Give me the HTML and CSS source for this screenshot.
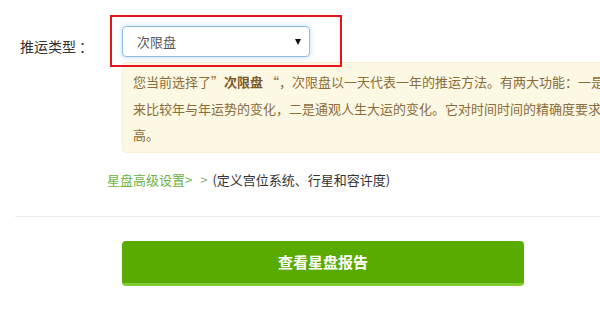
FILE: index.html
```html
<!DOCTYPE html>
<html lang="zh-CN">
<head>
<meta charset="utf-8">
<title>推运类型</title>
<link rel="stylesheet" href="styles.css">
</head>
<body>
<div class="page">
  <div class="form-row">
    <label class="label">推运类型<span class="colon">：</span></label>
    <div class="control">
      <div class="select-wrap">
        <select class="select">
          <option>次限盘</option>
        </select>
      </div>
      <div class="info">您当前选择了”<b>次限盘</b> “，次限盘以一天代表一年的推运方法。有两大功能：一是用来比较年与年运势的变化，二是通观人生大运的变化。它对时间时间的精确度要求很高。</div>
      <div class="highlight"></div>
    </div>
  </div>
  <div class="advanced">
    <a class="adv-link" href="#">星盘高级设置&gt;</a><span class="adv-arrow">&gt;</span><span class="adv-desc">(定义宫位系统、行星和容许度)</span>
  </div>
  <div class="divider"></div>
  <div class="actions">
    <button class="submit" type="button">查看星盘报告</button>
  </div>
</div>
</body>
</html>
```

FILE: styles.css
```css
html, body {
  margin: 0;
  padding: 0;
  background: #ffffff;
  overflow: hidden;
}

body {
  font-family: "Noto Sans CJK SC", "Noto Sans", sans-serif;
  color: #333333;
}

.page {
  width: 600px;
  padding-top: 26px;
}

.form-row {
  display: flex;
  align-items: flex-start;
}

.label {
  flex: none;
  width: 122px;
  box-sizing: border-box;
  padding-left: 20px;
  padding-top: 5px;
  font-size: 14px;
  line-height: 31px;
  color: #333333;
}

.colon {
  margin-left: 3px;
}

.control {
  position: relative;
  flex: none;
  width: 700px;
}

.select-wrap {
  position: relative;
  width: 188px;
  height: 31px;
}

.select-wrap::after {
  content: "";
  position: absolute;
  right: 9px;
  top: 13px;
  border-left: 3px solid transparent;
  border-right: 3px solid transparent;
  border-top: 6px solid #111111;
  pointer-events: none;
}

.select {
  -webkit-appearance: none;
  appearance: none;
  width: 188px;
  height: 31px;
  box-sizing: border-box;
  margin: 0;
  padding: 0 14px;
  border: 1px solid #8dbde6;
  border-radius: 4px;
  background: #ffffff;
  box-shadow: 0 0 5px rgba(102, 175, 233, 0.45);
  font-family: "Noto Sans CJK SC", sans-serif;
  font-size: 13px;
  color: #555555;
  outline: none;
}

.info {
  width: 492px;
  margin-top: 5px;
  padding: 6px 10px 3px 10px;
  background: #fcf8e3;
  border: 1px solid #f8efd6;
  border-radius: 4px;
  font-size: 13px;
  line-height: 26.5px;
  color: #8a6d3b;
}

.info b {
  color: #7a5a2a;
}

.highlight {
  position: absolute;
  left: -12px;
  top: -11px;
  width: 228px;
  height: 48px;
  border: 2px solid #e3141b;
  pointer-events: none;
}

.advanced {
  padding-left: 107px;
  margin-top: 17px;
  font-size: 13px;
  line-height: 20px;
}

.adv-link {
  color: #6db33f;
  text-decoration: none;
}

.adv-arrow {
  padding: 0 5px 0 8px;
  color: #8fa87a;
}

.adv-desc {
  color: #333333;
}

.divider {
  margin: 26px 0 0 15px;
  height: 1px;
  background: #ececec;
}

.actions {
  padding-left: 122px;
  margin-top: 24px;
}

.submit {
  display: block;
  width: 402px;
  height: 45px;
  margin: 0;
  border: 0;
  border-bottom: 3px solid #80cc2e;
  border-radius: 4px;
  background: #5aab00;
  color: #ffffff;
  font-family: "Noto Sans CJK SC", sans-serif;
  font-size: 15px;
  font-weight: bold;
  cursor: pointer;
}
```
